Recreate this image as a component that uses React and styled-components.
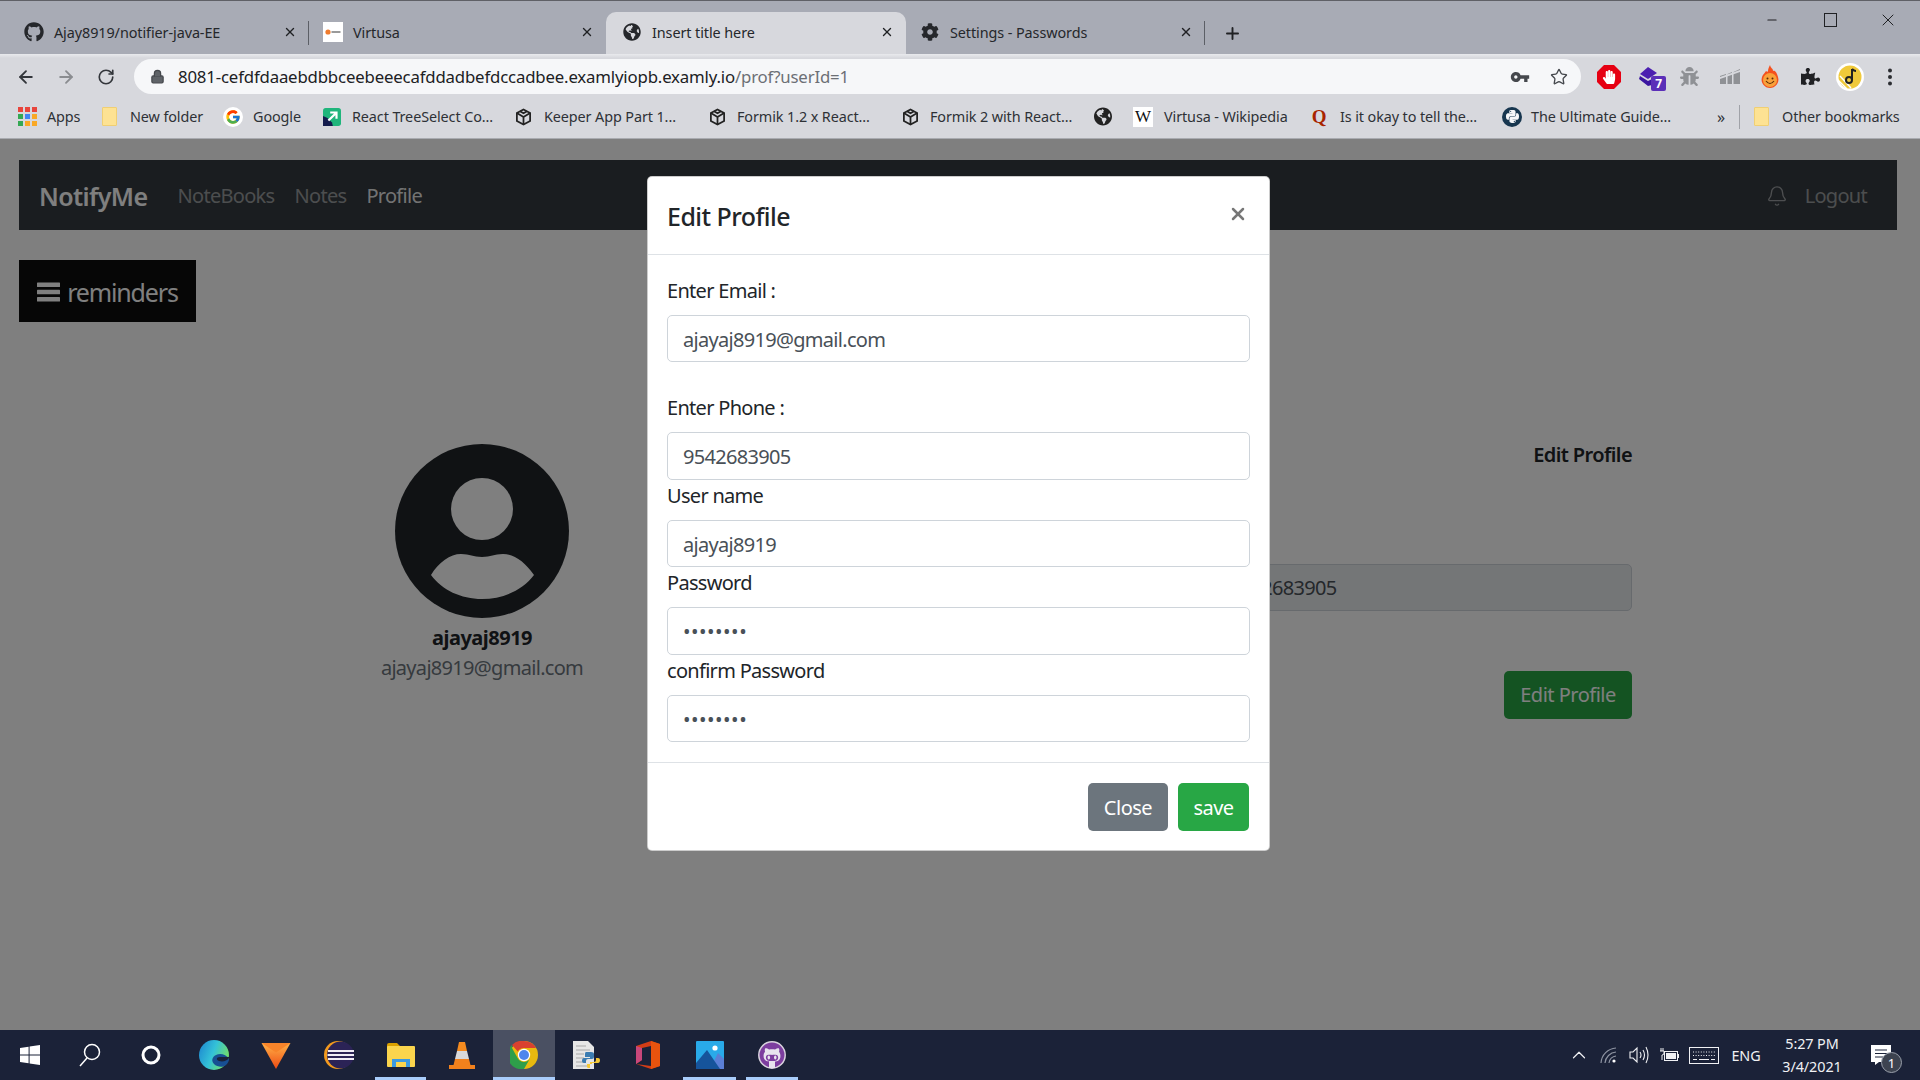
import React from 'react';
import styled, { createGlobalStyle } from 'styled-components';
import { ArrowLeft, ArrowRight, RotateCw, Star, Bell, X, Plus, Lock, ChevronUp, Minus } from 'lucide-react';
import { FaGithub, FaGithubAlt, FaGlobeAmericas, FaCog, FaPuzzlePiece, FaBug, FaHandPaper, FaPython } from 'react-icons/fa';
import { FcGoogle } from 'react-icons/fc';
import { MdVpnKey } from 'react-icons/md';

const FONT = `"Noto Sans", "Open Sans", Arial, sans-serif`;

const Global = createGlobalStyle`
  html, body { margin: 0; padding: 0; height: 100%; overflow: hidden; }
  body { font-family: ${FONT}; background: #fff; }
  * { box-sizing: border-box; }
`;

const Screen = styled.div`
  width: 1920px; height: 1080px; display: flex; flex-direction: column; overflow: hidden;
`;

/* Browser chrome */
const TabStrip = styled.div`
  height: 54px; background: #a8abb5; border-top: 1px solid #5f6066;
  display: flex; align-items: flex-end; padding-left: 10px;
`;
const Tab = styled.div`
  width: ${p => p.$w}px; height: 42px; display: flex; align-items: center; padding: 0 12px 2px 14px;
  position: relative; border-radius: 10px 10px 0 0; font-size: 14.4px; letter-spacing: -.08px; color: #25272b;
  background: ${p => (p.$active ? '#d7d8dd' : 'transparent')};
  padding-left: ${p => (p.$active ? 16 : 14)}px;
  ${p => p.$sep && `&::after { content: ''; position: absolute; right: 0; top: 9px; height: 24px; width: 1px; background: #5c5f66; }`}
`;
const TabIcon = styled.span`
  width: 20px; height: 20px; display: flex; align-items: center; justify-content: center; margin-right: 10px; color: #25272b; font-size: 20px; flex: none;
`;
const TabTitle = styled.span`flex: 1; white-space: nowrap;`;
const TabClose = styled.span`display: flex; color: #202124;`;
const NewTab = styled.div`width: 54px; height: 42px; display: flex; align-items: center; justify-content: center; color: #202124;`;
const WindowControls = styled.div`
  margin-left: auto; align-self: flex-start; display: flex; height: 38px; align-items: center; color: #202124; padding-right: 3px;
`;
const WinBtn = styled.span`width: 58px; display: flex; align-items: center; justify-content: center;`;
const MaxBox = styled.span`width: 13px; height: 14px; border: 1.3px solid #202124;`;

const Toolbar = styled.div`
  height: 41px; display: flex; align-items: flex-start; padding-top: 5px; background: linear-gradient(#e9eaed, #d7d8dd 4px);
`;
const NavBtn = styled.span`
  width: 40px; height: 35px; display: flex; align-items: center; justify-content: center; color: ${p => p.$off ? '#8a8c90' : '#33363b'};
  margin-left: ${p => p.$first ? 6 : 0}px;
`;
const Omnibox = styled.div`
  width: 1447px; margin-left: 8px; height: 35px; border-radius: 18px; background: #f6f7f9; display: flex; align-items: center; padding-left: 16px; padding-right: 13px;
`;
const UrlText = styled.span`
  margin-left: 13px; font-size: 16.8px; letter-spacing: -.17px; color: #202124; white-space: nowrap; flex: 1;
`;
const UrlDim = styled.span`color: #6c6f75;`;
const OmniIcon = styled.span`display: flex; color: #45484d; margin-left: ${p => p.$gap || 0}px;`;
const Extensions = styled.div`display: flex; margin-left: 8px; height: 35px; align-items: center;`;
const Ext = styled.span`
  width: 40.2px; height: 35px; display: flex; align-items: center; justify-content: center; position: relative; color: ${p => p.$c || '#202124'};
`;
const ExtBadge = styled.span`
  position: absolute; left: 22px; top: 17px; width: 15px; height: 15px; border-radius: 2px; background: #5b2fb8; color: #fff; font-size: 12px; font-weight: 700; display: flex; align-items: center; justify-content: center;
`;
const HandMark = styled.span`position: absolute; inset: 0; display: flex; align-items: center; justify-content: center; color: #fff;`;

const Bookmarks = styled.div`
  height: 44px; background: #d7d8dd; border-bottom: 1px solid #a9abb0; display: flex; align-items: center; padding-left: 18px; font-size: 14.4px; letter-spacing: -.1px; color: #2e3136;
`;
const Mark = styled.div`
  width: ${p => p.$w}px; flex: none; display: flex; align-items: center; white-space: nowrap;
`;
const MarkIcon = styled.span`
  width: 18px; height: 20px; flex: none; display: flex; align-items: center; justify-content: center; margin-right: ${p => p.$gap ?? 11}px;
`;
const AppsDots = styled.span`display: grid; grid-template-columns: repeat(3, 5px); gap: 2px;`;
const Dot = styled.i`width: 5px; height: 5px; background: ${p => p.$c}; display: block;`;
const FolderGlyph = styled.span`width: 15px; height: 19px; background: #fde293; border: 1px solid #f0cf73; border-radius: 1px;`;
const GoogleDisc = styled.span`width: 20px; height: 20px; flex: none; border-radius: 50%; background: #fff; display: flex; align-items: center; justify-content: center;`;
const WikiGlyph = styled.span`width: 20px; height: 20px; flex: none; background: #fff; color: #111; font: 400 17px "Liberation Serif", serif; display: flex; align-items: center; justify-content: center;`;
const QuoraGlyph = styled.span`color: #a82400; font: 700 19px "Liberation Serif", serif;`;
const PyGlyph = styled.span`width: 20px; height: 20px; flex: none; border-radius: 50%; background: #17364f; color: #f6f7f9; display: flex; align-items: center; justify-content: center; font-size: 15px;`;
const BarDivider = styled.span`width: 1px; height: 24px; background: #a0a2a8; margin: 0 12px 0 12px; flex: none;`;
const Chevrons = styled.span`width: 12px; font-size: 16px; text-align: center; flex: none;`;

/* Page */
const Page = styled.main`
  flex: 1; position: relative; background: #fff; padding: 21px 22px 0 19px; overflow: hidden; font-size: 20px; color: #212529;
  line-height: 30px; letter-spacing: -.7px;
`;
const Navbar = styled.nav`
  height: 70px; background: #343a40; display: flex; align-items: center; padding: 1px 30px 0 20px; margin-right: 1px;
`;
const Brand = styled.span`font-size: 25px; font-weight: 600; color: #fff; margin-right: 30px; letter-spacing: -.6px;`;
const NavLink = styled.span`margin-right: 20px; color: ${p => p.$active ? 'rgba(255,255,255,.9)' : 'rgba(255,255,255,.5)'};`;
const NavRight = styled.div`margin-left: auto; display: flex; align-items: center; gap: 17px; color: rgba(255,255,255,.5);`;
const RemindersBtn = styled.button`
  margin-top: 30px; width: 177px; height: 62px; background: #0c0c0c; border: 0; color: #fff; display: flex; align-items: center; justify-content: center; gap: 7px; font: inherit; font-size: 25px; letter-spacing: -1.15px; padding: 2px 0 0;
`;
const ProfileRow = styled.section`
  margin: 118px 266px 0 261px; display: grid; grid-template-columns: 404px 1fr;
`;
const ProfileSide = styled.div`
  display: flex; flex-direction: column; align-items: center; padding-top: 4px;
`;
const Username = styled.b`font-weight: 700; margin-top: 5px; letter-spacing: -.5px;`;
const Muted = styled.span`color: #6c757d;`;
const Details = styled.div`display: flex; flex-direction: column; align-items: flex-end;`;
const DetailsHead = styled.div`font-weight: 600; letter-spacing: -.6px;`;
const ReadonlyField = styled.input`
  width: 419px; height: 47px; margin-top: 94px; background: #e9ecef; border: 1px solid #ced4da; border-radius: 5px; padding: 0 15px; font: inherit; letter-spacing: inherit; color: #495057;
`;
const SuccessBtn = styled.button`
  margin-top: 60px; width: 128px; height: 48px; border: 0; border-radius: 5px; background: #28a745; color: #fff; font: inherit; letter-spacing: -.5px; padding: 0;
`;
const Backdrop = styled.div`position: absolute; inset: 0; background: rgba(0,0,0,.5);`;
const Modal = styled.div`
  position: absolute; left: 647px; top: 37px; width: 623px; height: 675px; background: #fff; border-radius: 5px; border: 1px solid rgba(0,0,0,.2); display: flex; flex-direction: column;
`;
const ModalHeader = styled.header`
  height: 78px; flex: none; border-bottom: 1px solid #dee2e6; display: flex; align-items: center; justify-content: space-between; padding: 0 19px;
`;
const ModalTitle = styled.h5`margin: 0; font-size: 25px; font-weight: 500; line-height: 36px; letter-spacing: -.55px;`;
const ModalClose = styled.span`display: flex; color: #777; margin-top: -4px; margin-right: 2px;`;
const ModalBody = styled.div`flex: 1; padding: 0 19px; display: flex; flex-direction: column;`;
const FieldLabel = styled.label`display: block; line-height: 30px; margin-top: ${p => p.$mt || 0}px; margin-bottom: ${p => p.$mb || 0}px;`;
const FieldInput = styled.input`
  display: block; width: 100%; height: ${p => p.$h || 47}px; flex: none; border: 1px solid #ced4da; border-radius: 5px; padding: 1px 15px 0; font: inherit; letter-spacing: inherit; color: #495057; background: #fff; outline: 0;
  &[type='password'] { letter-spacing: .5px; }
`;
const ModalFooter = styled.footer`
  height: 88px; flex: none; border-top: 1px solid #dee2e6; display: flex; align-items: flex-start; justify-content: flex-end; padding: 20px 20px 0; gap: 10px;
`;
const FootBtn = styled.button`
  width: ${p => p.$w}px; height: 48px; border: 0; border-radius: 5px; background: ${p => p.$bg}; color: #fff; font: inherit; letter-spacing: -.5px; padding: 1px 0 0;
`;

/* Taskbar */
const Taskbar = styled.footer`
  height: 50px; flex: none; background: #1b2238; display: flex; align-items: stretch; color: #fff;
`;
const TaskCell = styled.div`
  width: ${p => p.$w}px; flex: none; display: flex; align-items: center; justify-content: center; position: relative;
  background: ${p => p.$active ? '#4a5062' : 'transparent'};
  ${p => p.$open && `&::after { content: ''; position: absolute; left: ${p.$active ? 0 : 5}px; right: ${p.$active ? 0 : 5}px; bottom: 0; height: 3px; background: #a9cdfb; }`}
`;
const Tray = styled.div`margin-left: auto; display: flex; align-items: center; font-size: 14.4px; letter-spacing: -.1px; color: #f0f1f4; padding-right: 14px;`;
const TrayItem = styled.span`display: flex; align-items: center; justify-content: center; width: ${p => p.$w}px; flex: none;`;
const Clock = styled.span`width: 88px; text-align: center; line-height: 23px; display: block;`;
const Notify = styled.span`width: 50px; display: flex; justify-content: center; position: relative;`;
const NotifyCount = styled.span`
  position: absolute; left: 25px; top: 7px; width: 21px; height: 21px; border-radius: 50%; background: #3d4350; border: 1px solid #9aa0ab; font-size: 13px; display: flex; align-items: center; justify-content: center; color: #fff;
`;

const Cube = () => (
  <svg width="15" height="18" viewBox="0 0 17 19" fill="none" stroke="#222" strokeWidth="2">
    <path d="M8.5 1 L16 5 V14 L8.5 18 L1 14 V5 Z" />
    <path d="M1 5 L8.5 9.5 L16 5 M8.5 9.5 V18 M4.5 3 L8.5 5.2 L12.5 3" />
  </svg>
);
const ReactFav = () => (
  <svg width="20" height="20" viewBox="0 0 20 20">
    <rect width="20" height="20" rx="3" fill="#1fb57b" />
    <path d="M0 20 V9 L5 11 L10 16 L11 20 Z" fill="#141b4d" />
    <path d="M6 14 L14 6 M8 5 H15 V12" stroke="#fff" strokeWidth="2.4" fill="none" />
  </svg>
);
const Virtusa = () => (
  <svg width="20" height="20" viewBox="0 0 20 20">
    <rect width="20" height="20" fill="#fff" />
    <circle cx="5" cy="10" r="2.6" fill="#ef7b2d" />
    <rect x="8.5" y="9" width="9" height="2" fill="#9a9a9a" />
  </svg>
);
const Stack = () => (
  <svg width="24" height="24" viewBox="0 0 24 24">
    <path d="M11 2 L20 8 L11 14 L3 9 Z" fill="#4b1fb0" />
    <path d="M3 11 L11 16 L15 14 V20 L11 21 L2 14 Z" fill="#3b16a0" />
  </svg>
);
const Signal = () => (
  <svg width="20" height="16" viewBox="0 0 20 16" fill="#8f9195">
    <path d="M0 7 L6 5 V15 H0 Z M7.5 5 L12 3 V15 H7.5 Z M13.5 3 L20 0 V15 H13.5 Z" />
    <path d="M0 8 L20 1 V3 L0 10 Z" fill="#d7d8dd" />
  </svg>
);
const Flame = () => (
  <svg width="20" height="24" viewBox="0 0 20 24">
    <path d="M10 0 C11 4 13 3 13 6 C15 5 17 8 18 12 C20 18 15 23 10 23 C5 23 0 18 2 12 C3 9 5 8 6 6 C7 7 8 7 8 6 C8 4 9 2 10 0Z" fill="#f4511e" />
    <circle cx="10" cy="15" r="7" fill="#f9a13a" />
    <circle cx="7.5" cy="13.5" r="1" fill="#5b2c06" /><circle cx="12.5" cy="13.5" r="1" fill="#5b2c06" />
    <path d="M6 16 Q10 21 14 16" stroke="#5b2c06" strokeWidth="1.2" fill="none" />
  </svg>
);
const ProfileBadge = () => (
  <svg width="28" height="28" viewBox="0 0 28 28">
    <circle cx="14" cy="14" r="14" fill="#fff" />
    <circle cx="14" cy="14" r="11.5" fill="#f0c93a" />
    <path d="M2 17 L11 26 M4 13 L15 25" stroke="#fff" strokeWidth="1.4" />
    <path d="M16 6 V17" stroke="#222" strokeWidth="2" />
    <path d="M16 6 Q18 8 20 8" stroke="#222" strokeWidth="2" fill="none" />
    <circle cx="13" cy="17" r="3" fill="none" stroke="#222" strokeWidth="2" />
  </svg>
);
const Kebab = () => (
  <svg width="6" height="18" viewBox="0 0 6 18" fill="#2b2d31">
    <circle cx="3" cy="2.5" r="2" /><circle cx="3" cy="9" r="2" /><circle cx="3" cy="15.5" r="2" />
  </svg>
);
const Hamburger = () => (
  <svg width="23" height="20" viewBox="0 0 23 20" fill="currentColor">
    <rect width="23" height="4.6" y=".4" rx=".6" /><rect width="23" height="4.6" y="7.7" rx=".6" /><rect width="23" height="4.6" y="15" rx=".6" />
  </svg>
);
const Winlogo = () => (
  <svg width="20" height="20" viewBox="0 0 20 20" fill="#fff">
    <path d="M0 3 L8.6 1.7 V9.5 H0 Z M9.6 1.5 L20 0 V9.5 H9.6 Z M0 10.5 H8.6 V18.3 L0 17 Z M9.6 10.5 H20 V20 L9.6 18.5 Z" />
  </svg>
);
const SearchGlass = () => (
  <svg width="22" height="24" viewBox="0 0 22 24" fill="none" stroke="#fff" strokeWidth="1.5">
    <ellipse cx="13" cy="9" rx="7.5" ry="7.5" /><path d="M8 15 L1 23" />
  </svg>
);
const Ring = () => (
  <svg width="20" height="20" viewBox="0 0 20 20"><circle cx="10" cy="10" r="8" fill="none" stroke="#fff" strokeWidth="3" /></svg>
);
const Edge = () => (
  <svg width="30" height="30" viewBox="0 0 30 30">
    <defs>
      <linearGradient id="edgeA" x1="0" y1="0" x2="1" y2="0.4"><stop offset="0" stopColor="#1b83cf" /><stop offset=".55" stopColor="#34c2d8" /><stop offset="1" stopColor="#6fdc6f" /></linearGradient>
    </defs>
    <circle cx="15" cy="15" r="15" fill="url(#edgeA)" />
    <path d="M30 19 C27 14 21 13 17 15 C13 17 12 21 15 24 C18 27 24 28 27 25 C29 23 30 21 30 19Z" fill="#174f93" />
    <path d="M30 17 H21 C17 17 17 20 20 21 C24 22 28 21 30 18Z" fill="#1b2238" />
  </svg>
);
const Tri = () => (
  <svg width="30" height="27" viewBox="0 0 30 28">
    <defs><linearGradient id="triA" x1="0" y1="0" x2="0" y2="1"><stop offset="0" stopColor="#ffb347" /><stop offset="1" stopColor="#ee4a14" /></linearGradient></defs>
    <path d="M0 1 H30 L15 28 Z" fill="url(#triA)" /><path d="M0 1 H30 L15 11 Z" fill="#f7842a" />
  </svg>
);
const Eclipse = () => (
  <svg width="30" height="28" viewBox="0 0 30 28">
    <circle cx="14" cy="14" r="14" fill="#f39a1e" />
    <circle cx="16.5" cy="14" r="13.5" fill="#2b2356" />
    <g fill="#f0eef6"><rect x="4" y="9" width="26" height="2" /><rect x="3.5" y="13" width="26.5" height="2" /><rect x="4" y="17" width="26" height="2" /></g>
  </svg>
);
const Folder = () => (
  <svg width="28" height="24" viewBox="0 0 28 24">
    <path d="M0 2 Q0 0 2 0 H10 L13 3 H4 V8 H0 Z" fill="#dba100" />
    <rect y="3" width="28" height="21" rx="1" fill="#fbd54d" />
    <path d="M5 24 V16 H23 V24 H19 V19 H9 V24 Z" fill="#3c9ae0" />
  </svg>
);
const Vlc = () => (
  <svg width="26" height="29" viewBox="0 0 26 29">
    <path d="M10 1 H16 L18 10 H8 Z" fill="#f58b1f" />
    <path d="M8 10 H18 L20 18 H6 Z" fill="#d9d9d9" />
    <path d="M6 18 H20 L21.5 24 H26 V28 H0 V24 H4.5 Z" fill="#f2811c" />
  </svg>
);
const Chrome = () => (
  <svg width="28" height="28" viewBox="0 0 28 28">
    <circle cx="14" cy="14" r="14" fill="#e8b90f" />
    <path d="M14 0 A14 14 0 0 1 26.1 7 H14 A7 7 0 0 0 7.8 10.5 L2 3.9 A14 14 0 0 1 14 0Z" fill="#d9412f" />
    <path d="M2 3.9 A14 14 0 0 0 14 28 L20 17.5 A7 7 0 0 1 7.9 17.5 L2 7Z" fill="#2e9e4a" />
    <circle cx="14" cy="14" r="6.2" fill="#fff" /><circle cx="14" cy="14" r="5" fill="#4f86ec" />
  </svg>
);
const PyDoc = () => (
  <svg width="28" height="29" viewBox="0 0 28 29">
    <path d="M1 0 H16 L22 6 V28 H1 Z" fill="#e6e6e6" />
    <g stroke="#a8a8a8" strokeWidth="1"><path d="M4 5 H14 M4 9 H18 M4 13 H12 M4 17 H12 M4 21 H12 M4 25 H18" /></g>
    <path d="M19 11 H14 Q13 11 13 13 V16 H18 V17 H12 Q10 17 10 20 Q10 22 12 22 H14 V20 Q14 18 16 18 H20 Q22 18 22 16 V13 Q22 11 19 11Z" fill="#3b7cb2" />
    <path d="M21 27 H16 Q15 27 15 25 V23 H20 V22 H26 Q28 22 28 19 Q28 17 26 17 H24 V19 Q24 21 22 21 H18 V27 H21Z" fill="#f6c936" />
  </svg>
);
const Office = () => (
  <svg width="24" height="28" viewBox="0 0 24 28">
    <path d="M0 5 L15 0 L24 3 V25 L15 28 L0 23 L15 25 V5 L6 7 V19 L0 23Z" fill="#d33d16" />
    <path d="M15 0 L24 3 V25 L15 28 Z" fill="#e8530e" />
    <path d="M0 5 L6 7 V19 L0 23 Z" fill="#c9477a" />
  </svg>
);
const Photos = () => (
  <svg width="28" height="28" viewBox="0 0 28 28">
    <rect width="28" height="28" rx="1" fill="#29aae9" />
    <circle cx="19" cy="7" r="2.6" fill="#fff" />
    <path d="M14 28 L22 12 L28 18 V28Z" fill="#5b7fd6" />
    <path d="M0 22 L11 9 L24 28 H0Z" fill="#16549b" />
  </svg>
);
const GhBadge = () => (
  <svg width="28" height="28" viewBox="0 0 28 28">
    <circle cx="14" cy="14" r="13.2" fill="#7d3e9f" stroke="#d9d3de" strokeWidth="1.5" />
    <foreignObject x="5" y="5" width="18" height="22"><FaGithubAlt size={18} color="#e8e4ee" /></foreignObject>
    <rect x="11" y="20" width="6" height="7" fill="#e8e4ee" />
  </svg>
);
const Wifi = () => (
  <svg width="18" height="18" viewBox="0 0 18 18" fill="none" stroke="#8f95a3" strokeWidth="1.2">
    <path d="M1 17 A16 16 0 0 1 16 2 M5 17 A12 12 0 0 1 16 6 M9 17 A8 8 0 0 1 16 10" />
    <circle cx="14" cy="15" r="1.6" fill="#fff" stroke="none" />
  </svg>
);
const Speaker = () => (
  <svg width="21" height="18" viewBox="0 0 21 18" fill="none" stroke="#f0f1f4" strokeWidth="1.1">
    <path d="M1 6 H4 L8 2 V16 L4 12 H1 Z" />
    <path d="M11 6 Q13 9 11 12 M14 4 Q17 9 14 14 M17 1 Q21 9 17 17" />
  </svg>
);
const Battery = () => (
  <svg width="20" height="14" viewBox="0 0 20 14">
    <rect x="5.5" y="3.5" width="13" height="9" fill="none" stroke="#f0f1f4" />
    <rect x="7" y="5" width="10" height="6" fill="#f0f1f4" /><rect x="18.5" y="6" width="1.5" height="4" fill="#f0f1f4" />
    <path d="M2 0 V3 M4 0 V3 M1 3 H5 V5 Q5 7 3 7 V12" stroke="#f0f1f4" fill="none" />
  </svg>
);
const Keyboard = () => (
  <svg width="30" height="17" viewBox="0 0 30 17" fill="none" stroke="#f0f1f4">
    <rect x=".5" y=".5" width="29" height="16" />
    <path d="M4 5 H26 M4 8.5 H26" strokeDasharray="1 1.6" /><path d="M4 12.5 H8 M10 12.5 H20 M22 12.5 H26" />
  </svg>
);
const Note = () => (
  <svg width="22" height="20" viewBox="0 0 22 20">
    <path d="M1 0 H21 V17 H9 L5 20 V17 H1 Z" fill="#fff" />
    <path d="M5 5 H17 M5 8.5 H17 M5 12 H13" stroke="#1b2238" strokeWidth="1.2" />
  </svg>
);
const AvatarArt = () => (
  <svg width="174" height="174" viewBox="0 0 174 174" style={{ flex: 'none' }}>
    <circle cx="87" cy="87" r="87" fill="#212529" />
    <circle cx="87" cy="65" r="31" fill="#fff" />
    <path d="M36 131 C44 118 55 110 66 110 C75 110 78 113 87 113 C96 113 99 110 108 110 C119 110 130 118 139 131 C128 146 108 155 87 155 C66 155 47 146 36 131Z" fill="#fff" />
  </svg>
);

const tabs = [
  { w: 299, sep: true, title: 'Ajay8919/notifier-java-EE', icon: <FaGithub /> },
  { w: 297, title: 'Virtusa', icon: <Virtusa /> },
  { w: 300, active: true, title: 'Insert title here', icon: <FaGlobeAmericas size={18} /> },
  { w: 299, sep: true, title: 'Settings - Passwords', icon: <FaCog size={18} /> },
];

const appColors = ['#e8453c', '#e8453c', '#e8453c', '#34a853', '#4285f4', '#f9a825', '#34a853', '#f9a825', '#f9a825'];

const marks = [
  { w: 82, icon: <AppsDots>{appColors.map((c, i) => <Dot key={i} $c={c} />)}</AppsDots>, gap: 11, t: 'Apps' },
  { w: 124, icon: <FolderGlyph />, gap: 12, t: 'New folder' },
  { w: 99, icon: <GoogleDisc><FcGoogle size={16} /></GoogleDisc>, gap: 11, t: 'Google' },
  { w: 191, icon: <ReactFav />, gap: 11, t: 'React TreeSelect Co...' },
  { w: 194, icon: <Cube />, gap: 12, t: 'Keeper App Part 1...' },
  { w: 193, icon: <Cube />, gap: 11, t: 'Formik 1.2 x React...' },
  { w: 193, icon: <Cube />, gap: 11, t: 'Formik 2 with React...' },
  { w: 40, icon: <FaGlobeAmericas size={19} color="#222" />, gap: 0, t: '' },
  { w: 176, icon: <WikiGlyph>W</WikiGlyph>, gap: 12, t: 'Virtusa - Wikipedia' },
  { w: 193, icon: <QuoraGlyph>Q</QuoraGlyph>, gap: 12, t: 'Is it okay to tell the...' },
  { w: 212, icon: <PyGlyph><FaPython /></PyGlyph>, gap: 10, t: 'The Ultimate Guide...' },
];

const dockCells = [
  { w: 60, el: <Winlogo /> },
  { w: 60, el: <SearchGlass /> },
  { w: 62, el: <Ring /> },
  { w: 63, el: <Edge /> },
  { w: 62, el: <Tri /> },
  { w: 63, el: <Eclipse /> },
  { w: 61, el: <Folder />, open: true },
  { w: 62, el: <Vlc /> },
  { w: 62, el: <Chrome />, open: true, active: true },
  { w: 62, el: <PyDoc /> },
  { w: 61, el: <Office /> },
  { w: 63, el: <Photos />, open: true },
  { w: 62, el: <GhBadge />, open: true },
];

export default function App() {
  return (
    <Screen>
      <Global />
      <TabStrip>
        {tabs.map(t => (
          <Tab key={t.title} $w={t.w} $active={t.active} $sep={t.sep}>
            <TabIcon>{t.icon}</TabIcon>
            <TabTitle>{t.title}</TabTitle>
            <TabClose><X size={14} strokeWidth={2.4} /></TabClose>
          </Tab>
        ))}
        <NewTab><Plus size={19} strokeWidth={2.4} /></NewTab>
        <WindowControls>
          <WinBtn><Minus size={14} strokeWidth={2} /></WinBtn>
          <WinBtn><MaxBox /></WinBtn>
          <WinBtn><X size={20} strokeWidth={1.2} /></WinBtn>
        </WindowControls>
      </TabStrip>
      <Toolbar>
        <NavBtn $first><ArrowLeft size={20} strokeWidth={2.2} /></NavBtn>
        <NavBtn $off><ArrowRight size={20} strokeWidth={2.2} /></NavBtn>
        <NavBtn><RotateCw size={18} strokeWidth={2.2} /></NavBtn>
        <Omnibox>
          <OmniIcon><Lock size={15} fill="#5f6368" strokeWidth={2} /></OmniIcon>
          <UrlText>8081-cefdfdaaebdbbceebeeecafddadbefdccadbee.examlyiopb.examly.io<UrlDim>/prof?userId=1</UrlDim></UrlText>
          <OmniIcon><MdVpnKey size={20} /></OmniIcon>
          <OmniIcon $gap={20}><Star size={18} strokeWidth={1.8} /></OmniIcon>
        </Omnibox>
        <Extensions>
          <Ext>
            <svg width="24" height="24" viewBox="0 0 24 24"><path d="M7 0 H17 L24 7 V17 L17 24 H7 L0 17 V7 Z" fill="#e60012" /></svg>
            <HandMark><FaHandPaper size={14} /></HandMark>
          </Ext>
          <Ext><Stack /><ExtBadge>7</ExtBadge></Ext>
          <Ext $c="#8f9195"><FaBug size={19} /></Ext>
          <Ext><Signal /></Ext>
          <Ext><Flame /></Ext>
          <Ext><FaPuzzlePiece size={19} /></Ext>
          <Ext><ProfileBadge /></Ext>
          <Ext><Kebab /></Ext>
        </Extensions>
      </Toolbar>
      <Bookmarks>
        {marks.map((m, i) => (
          <Mark key={i} $w={m.w}>
            <MarkIcon $gap={m.gap}>{m.icon}</MarkIcon>
            {m.t}
          </Mark>
        ))}
        <Chevrons>»</Chevrons>
        <BarDivider />
        <MarkIcon $gap={12}><FolderGlyph /></MarkIcon>
        Other bookmarks
      </Bookmarks>
      <Page>
        <Navbar>
          <Brand>NotifyMe</Brand>
          <NavLink>NoteBooks</NavLink>
          <NavLink>Notes</NavLink>
          <NavLink $active>Profile</NavLink>
          <NavRight>
            <Bell size={22} strokeWidth={1.5} />
            <span>Logout</span>
          </NavRight>
        </Navbar>
        <RemindersBtn><Hamburger />reminders</RemindersBtn>
        <ProfileRow>
          <ProfileSide>
            <AvatarArt />
            <Username>ajayaj8919</Username>
            <Muted>ajayaj8919@gmail.com</Muted>
          </ProfileSide>
          <Details>
            <DetailsHead>Edit Profile</DetailsHead>
            <ReadonlyField readOnly value="9542683905" />
            <SuccessBtn>Edit Profile</SuccessBtn>
          </Details>
        </ProfileRow>
        <Backdrop />
        <Modal>
          <ModalHeader>
            <ModalTitle>Edit Profile</ModalTitle>
            <ModalClose><X size={20} strokeWidth={3} /></ModalClose>
          </ModalHeader>
          <ModalBody>
            <FieldLabel $mt={21} $mb={9}>Enter Email :</FieldLabel>
            <FieldInput readOnly value="ajayaj8919@gmail.com" />
            <FieldLabel $mt={31} $mb={9}>Enter Phone :</FieldLabel>
            <FieldInput readOnly value="9542683905" $h={48} />
            <FieldLabel $mt={1} $mb={9}>User name</FieldLabel>
            <FieldInput readOnly value="ajayaj8919" />
            <FieldLabel $mt={1} $mb={9}>Password</FieldLabel>
            <FieldInput readOnly type="password" value="password" $h={48} />
            <FieldLabel $mt={1} $mb={9}>confirm Password</FieldLabel>
            <FieldInput readOnly type="password" value="password" />
          </ModalBody>
          <ModalFooter>
            <FootBtn $w={80} $bg="#6c757d">Close</FootBtn>
            <FootBtn $w={71} $bg="#28a745">save</FootBtn>
          </ModalFooter>
        </Modal>
      </Page>
      <Taskbar>
        {dockCells.map((c, i) => (
          <TaskCell key={i} $w={c.w} $open={c.open} $active={c.active}>{c.el}</TaskCell>
        ))}
        <Tray>
          <TrayItem $w={30}><ChevronUp size={22} strokeWidth={1.3} /></TrayItem>
          <TrayItem $w={30}><Wifi /></TrayItem>
          <TrayItem $w={30}><Speaker /></TrayItem>
          <TrayItem $w={30}><Battery /></TrayItem>
          <TrayItem $w={40}><Keyboard /></TrayItem>
          <TrayItem $w={44}>ENG</TrayItem>
          <Clock>5:27 PM<br />3/4/2021</Clock>
          <Notify><Note /><NotifyCount>1</NotifyCount></Notify>
        </Tray>
      </Taskbar>
    </Screen>
  );
}
